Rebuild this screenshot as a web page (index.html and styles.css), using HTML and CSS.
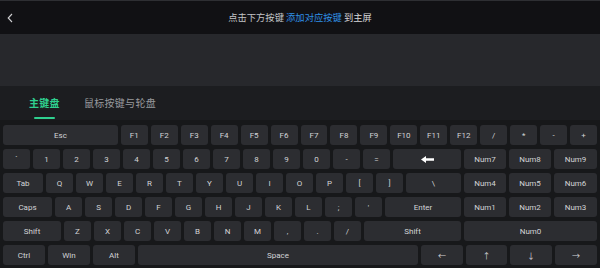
FILE: index.html
```html
<!DOCTYPE html>
<html lang="zh-CN">
<head>
<meta charset="utf-8">
<title>键盘</title>
<link rel="stylesheet" href="styles.css">
</head>
<body>
<div class="app">
  <header class="topbar">
    <svg class="back" width="6" height="10" viewBox="0 0 6 10"><polyline points="5,1 1.2,5 5,9" fill="none" stroke="#d0d0d2" stroke-width="1.1"/></svg>
    <div class="title"><span class="t-gray">点击下方按键</span> <span class="t-blue">添加对应按键</span> <span class="t-white">到主屏</span></div>
    <span class="spacer"></span>
  </header>
  <div class="band"></div>
  <nav class="tabs">
    <div class="tab active"><span class="tab-label">主键盘</span><span class="tab-line"></span></div>
    <div class="tab"><span class="tab-label">鼠标按键与轮盘</span></div>
  </nav>
  <main class="keyboard">
    <div class="row">
      <div class="key" style="flex-grow:115">Esc</div>
      <div class="key">F1</div><div class="key">F2</div><div class="key">F3</div><div class="key">F4</div>
      <div class="key">F5</div><div class="key">F6</div><div class="key">F7</div><div class="key">F8</div>
      <div class="key">F9</div><div class="key">F10</div><div class="key">F11</div><div class="key">F12</div>
      <div class="key">/</div><div class="key">*</div><div class="key">-</div><div class="key">+</div>
    </div>
    <div class="row">
      <div class="key">`</div>
      <div class="key">1</div><div class="key">2</div><div class="key">3</div><div class="key">4</div><div class="key">5</div>
      <div class="key">6</div><div class="key">7</div><div class="key">8</div><div class="key">9</div><div class="key">0</div>
      <div class="key">-</div><div class="key">=</div>
      <div class="key" style="flex-grow:68"><svg width="13" height="7" viewBox="0 0 13 7"><polygon points="0,3.5 5,0 5,2.2 13,2.2 13,4.8 5,4.8 5,7" fill="#ffffff"/></svg></div>
      <div class="key" style="flex-grow:42">Num7</div><div class="key" style="flex-grow:42">Num8</div><div class="key" style="flex-grow:43">Num9</div>
    </div>
    <div class="row">
      <div class="key" style="flex-grow:40">Tab</div>
      <div class="key">Q</div><div class="key">W</div><div class="key">E</div><div class="key">R</div><div class="key">T</div>
      <div class="key">Y</div><div class="key">U</div><div class="key">I</div><div class="key">O</div><div class="key">P</div>
      <div class="key">[</div><div class="key">]</div>
      <div class="key" style="flex-grow:55">\</div>
      <div class="key" style="flex-grow:42">Num4</div><div class="key" style="flex-grow:42">Num5</div><div class="key" style="flex-grow:43">Num6</div>
    </div>
    <div class="row">
      <div class="key" style="flex-grow:49">Caps</div>
      <div class="key">A</div><div class="key">S</div><div class="key">D</div><div class="key">F</div><div class="key">G</div>
      <div class="key">H</div><div class="key">J</div><div class="key">K</div><div class="key">L</div><div class="key">;</div><div class="key">'</div>
      <div class="key" style="flex-grow:76">Enter</div>
      <div class="key" style="flex-grow:42">Num1</div><div class="key" style="flex-grow:42">Num2</div><div class="key" style="flex-grow:43">Num3</div>
    </div>
    <div class="row">
      <div class="key" style="flex-grow:58">Shift</div>
      <div class="key">Z</div><div class="key">X</div><div class="key">C</div><div class="key">V</div><div class="key">B</div>
      <div class="key">N</div><div class="key">M</div><div class="key">,</div><div class="key">.</div><div class="key">/</div>
      <div class="key" style="flex-grow:97">Shift</div>
      <div class="key" style="flex-grow:133">Num0</div>
    </div>
    <div class="row">
      <div class="key" style="flex-grow:42">Ctrl</div><div class="key" style="flex-grow:42">Win</div><div class="key" style="flex-grow:42">Alt</div>
      <div class="key" style="flex-grow:280">Space</div>
      <div class="key" style="flex-grow:42">←</div><div class="key" style="flex-grow:41">↑</div><div class="key" style="flex-grow:42">↓</div><div class="key" style="flex-grow:42">→</div>
    </div>
  </main>
</div>
</body>
</html>
```

FILE: styles.css
```css
* { box-sizing: border-box; }
html, body { margin: 0; padding: 0; background: #17181a; }
body { font-family: Roboto, "Noto Sans", "Noto Sans CJK SC", sans-serif; }

.app {
  width: 600px;
  height: 268px;
  display: flex;
  flex-direction: column;
  background: #17181a;
  overflow: hidden;
}

.topbar {
  height: 34px;
  flex: none;
  background: #111114;
  border-top: 1px solid #2e2f33;
  display: grid;
  grid-template-columns: 30px 1fr 30px;
  align-items: center;
}
.back { margin-left: 7px; display: block; }
.title {
  text-align: center;
  font-family: "Noto Sans CJK SC", sans-serif;
  font-size: 9.3px;
  line-height: 13px;
}
.t-gray { color: #c3c4c7; }
.t-blue { color: #2f8fe6; }
.t-white { color: #d6d7d9; }

.band {
  height: 52px;
  flex: none;
  background: #27282c;
}

.tabs {
  height: 34px;
  flex: none;
  background: #1c1d20;
  display: flex;
  gap: 24px;
  padding-left: 29px;
}
.tab {
  display: flex;
  flex-direction: column;
  align-items: center;
  padding-top: 10px;
}
.tab-label {
  font-family: "Noto Sans CJK SC", sans-serif;
  font-size: 10px;
  line-height: 14px;
  color: #98999d;
  letter-spacing: 0.3px;
}
.tab.active .tab-label { color: #2fd08f; font-weight: 700; }
.tab-line {
  width: 21px;
  height: 2px;
  margin-top: 7px;
  background: #2fd08f;
  border-radius: 1px;
}

.keyboard {
  flex: 1;
  display: flex;
  flex-direction: column;
  gap: 4px;
  padding: 5px 3px 3px;
  background: #17181a;
}
.row {
  display: flex;
  gap: 3px;
  height: 20px;
}
.key {
  flex: 27 1 0;
  min-width: 0;
  background: #2c2d31;
  border-radius: 3px;
  color: #d2d3d6;
  font-size: 8px;
  display: flex;
  align-items: center;
  justify-content: center;
  white-space: nowrap;
}
```
